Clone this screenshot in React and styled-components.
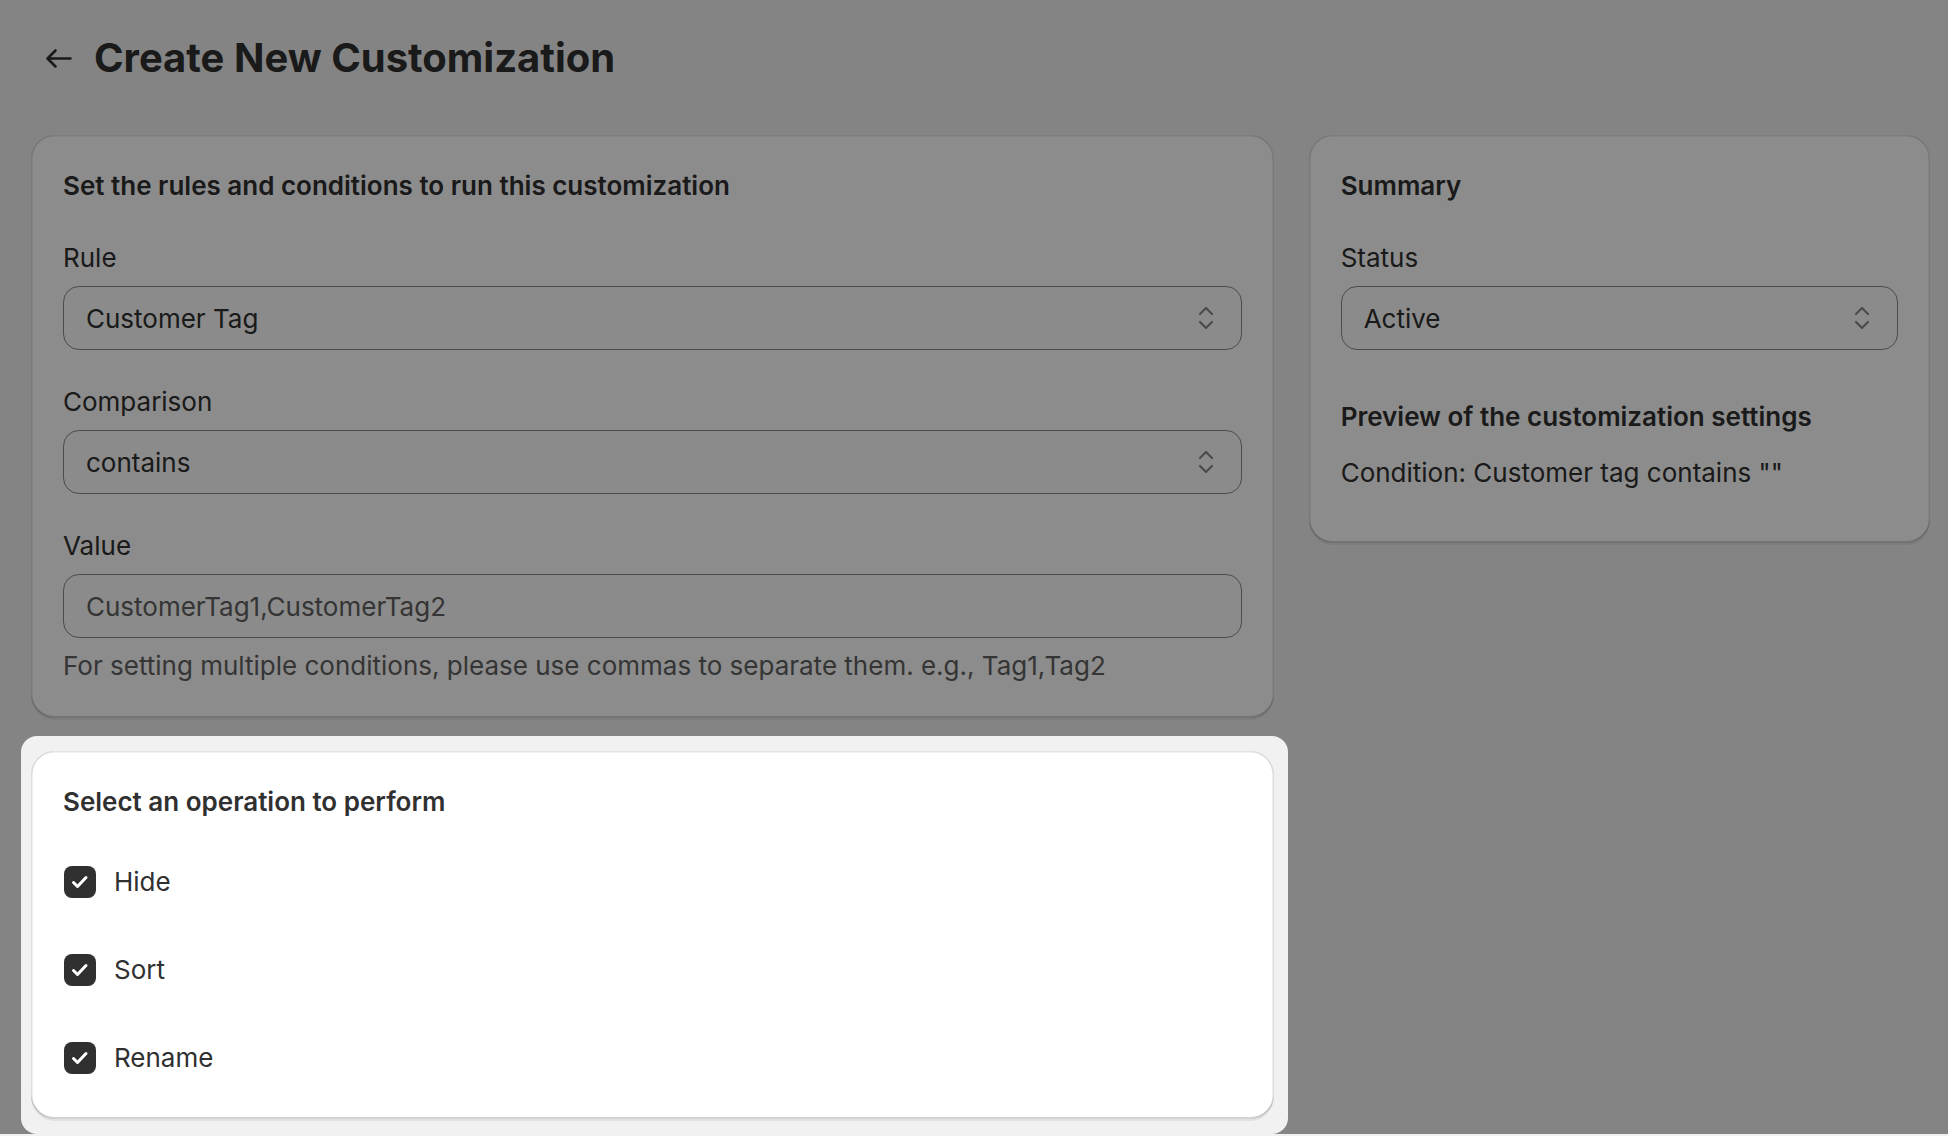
import styled, { createGlobalStyle } from 'styled-components'

const GlobalStyle = createGlobalStyle`
  html, body {
    margin: 0;
    padding: 0;
    background: #f1f1f1;
    font-family: Inter, "Noto Sans", "Liberation Sans", sans-serif;
    color: #303030;
    overflow: hidden;
  }
`

const Page = styled.div`
  padding: 34px 18px 0 31px;
`

const Header = styled.div`
  display: flex;
  align-items: center;
  gap: 22px;
  padding-left: 14px;
  height: 48px;
  margin-bottom: 53px;

  h1 {
    margin: 0;
    font-size: 40px;
    line-height: 48px;
    font-weight: 700;
    color: #303030;
  }
`

const BackButton = styled.button`
  display: flex;
  align-items: center;
  border: 0;
  padding: 0;
  background: none;
  cursor: pointer;
`

const Layout = styled.div`
  display: grid;
  grid-template-columns: minmax(0, 2fr) minmax(0, 1fr);
  gap: 35px;
  align-items: start;
`

const Column = styled.div`
  display: flex;
  flex-direction: column;
`

const Card = styled.div`
  background: #fff;
  border-radius: 24px;
  padding: ${p => p.$pad || '31px 32px 32px'};
  box-shadow: 0 2px 0 0 rgba(26, 26, 26, 0.07),
    inset 0 1.5px 0 0 rgba(204, 204, 204, 0.5),
    inset 0 -2px 0 0 rgba(0, 0, 0, 0.17),
    inset -1.5px 0 0 0 rgba(0, 0, 0, 0.13),
    inset 1.5px 0 0 0 rgba(0, 0, 0, 0.13);
`

const Spotlight = styled.div`
  position: relative;
  z-index: 1;
  margin: 18px -14px 0 -10px;
  padding: 15px 14px 15px 10px;
  background: #f1f1f1;
  border-radius: 16px;
  box-shadow: 0 0 0 4000px rgba(0, 0, 0, 0.45);
`

const Heading = styled.h2`
  margin: 0 0 ${p => p.$gap ?? 32}px;
  font-size: 26px;
  line-height: 40px;
  font-weight: 600;
  color: #303030;
`

const Field = styled.div`
  display: flex;
  flex-direction: column;
  margin-bottom: ${p => p.$last ? 0 : 32}px;
`

const Label = styled.label`
  font-size: 26px;
  line-height: 40px;
  margin-bottom: 8px;
`

const Box = styled.div`
  display: flex;
  align-items: center;
  justify-content: space-between;
  height: 64px;
  box-sizing: border-box;
  padding: 0 27px 0 22px;
  border: 1.5px solid #8a8a8a;
  border-radius: 16px;
  background: #fdfdfd;
  font-size: 26px;
  color: ${p => p.$placeholder ? '#616161' : '#303030'};
`

const Help = styled.div`
  margin-top: 8px;
  font-size: 26px;
  line-height: 40px;
  color: #616161;
`

const Preview = styled.div`
  margin-top: 47px;
  padding-bottom: 18px;

  h3 {
    margin: 0 0 16px;
    font-size: 26px;
    line-height: 40px;
    font-weight: 600;
  }
  p {
    margin: 0;
    font-size: 26px;
    line-height: 40px;
  }
`

const Choices = styled.div`
  display: flex;
  flex-direction: column;
  gap: 48px;
  margin-top: 40px;
  padding-bottom: 9px;
`

const Choice = styled.label`
  display: flex;
  align-items: center;
  gap: 18px;
  padding-left: 1px;
  font-size: 26px;
  line-height: 40px;
  cursor: pointer;
`

const Tick = styled.span`
  display: flex;
  align-items: center;
  justify-content: center;
  width: 32px;
  height: 32px;
  border-radius: 8px;
  background: #303030;
`

const Chevrons = () => (
  <svg width="16" height="26" viewBox="0 0 16 26" fill="none" stroke="#8a8a8a" strokeWidth="2.2" strokeLinecap="round" strokeLinejoin="round">
    <polyline points="2,9 8,3 14,9" />
    <polyline points="2,17 8,23 14,17" />
  </svg>
)

const Select = ({ value }) => (
  <Box>
    <span>{value}</span>
    <Chevrons />
  </Box>
)

const Checkbox = ({ label }) => (
  <Choice>
    <Tick>
      <svg width="18" height="14" viewBox="0 0 18 14" fill="none" stroke="#fff" strokeWidth="3" strokeLinecap="round" strokeLinejoin="round">
        <polyline points="2.5,7.5 6.5,11.5 15,2.5" />
      </svg>
    </Tick>
    {label}
  </Choice>
)

export default function App () {
  return (
    <>
      <GlobalStyle />
      <Page>
        <Header>
          <BackButton aria-label='Back'>
            <svg width="27" height="21" viewBox="0 0 27 21" fill="none" stroke="#303030" strokeWidth="2.6" strokeLinecap="round" strokeLinejoin="round">
              <path d="M25.5 10.5H2.5M10.5 2.5L2.5 10.5L10.5 18.5" />
            </svg>
          </BackButton>
          <h1>Create New Customization</h1>
        </Header>

        <Layout>
          <Column>
            <Card>
              <Heading>Set the rules and conditions to run this customization</Heading>
              <Field>
                <Label>Rule</Label>
                <Select value='Customer Tag' />
              </Field>
              <Field>
                <Label>Comparison</Label>
                <Select value='contains' />
              </Field>
              <Field $last>
                <Label>Value</Label>
                <Box $placeholder>CustomerTag1,CustomerTag2</Box>
                <Help>For setting multiple conditions, please use commas to separate them. e.g., Tag1,Tag2</Help>
              </Field>
            </Card>

            <Spotlight>
              <Card>
                <Heading $gap={0}>Select an operation to perform</Heading>
                <Choices>
                  <Checkbox label='Hide' />
                  <Checkbox label='Sort' />
                  <Checkbox label='Rename' />
                </Choices>
              </Card>
            </Spotlight>
          </Column>

          <Card>
            <Heading>Summary</Heading>
            <Field $last>
              <Label>Status</Label>
              <Select value='Active' />
            </Field>
            <Preview>
              <h3>Preview of the customization settings</h3>
              <p>Condition: Customer tag contains ""</p>
            </Preview>
          </Card>
        </Layout>
      </Page>
    </>
  )
}
